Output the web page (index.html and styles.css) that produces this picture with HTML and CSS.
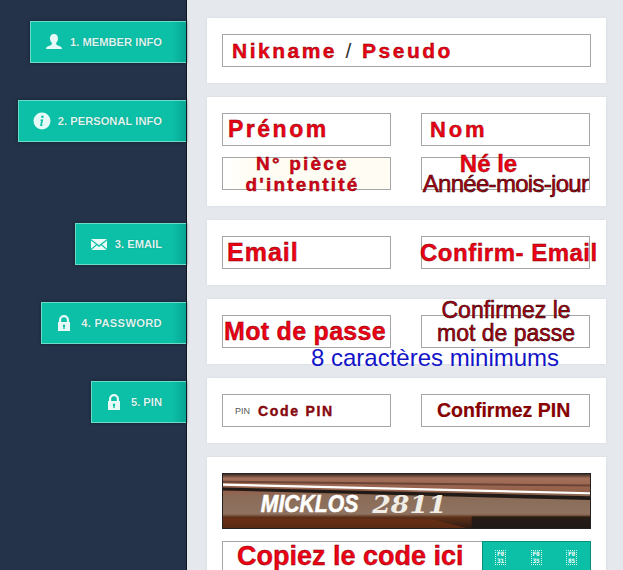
FILE: index.html
```html
<!DOCTYPE html>
<html lang="fr">
<head>
<meta charset="utf-8">
<title>Inscription</title>
<link rel="stylesheet" href="styles.css">
</head>
<body>
<div class="page">
  <aside class="sidebar">
    <div class="tab">
      <svg class="ico" viewBox="0 0 18 18"><path d="M9 1c2.700 0 4 2 4 4.500 0 1.800-.8 3.300-1.800 4.200v1.300c0 .8 1 1.100 3 1.900 1.500.6 2.800 1.300 2.800 3.100H1c0-1.800 1.300-2.500 2.800-3.100 2-.8 3-1.100 3-1.900V9.700C5.800 8.800 5 7.300 5 5.500 5 3 6.300 1 9 1z"/></svg>
      <span>1. MEMBER INFO</span>
    </div>
    <div class="tab">
      <svg class="ico" viewBox="0 0 18 18"><circle cx="9" cy="9" r="8.500"/><path class="cut" d="M9.400 3.400a1.300 1.300 0 1 1 0 2.600 1.300 1.300 0 0 1 0-2.600zM7 7.800l3.300-.5-1.300 5.300c-.1.500.3.500 1.300-.2l.2.400c-1.300 1.300-3.700 1.900-3.300.1l.9-3.900c.1-.6-.3-.6-1-.3z"/></svg>
      <span>2. PERSONAL INFO</span>
    </div>
    <div class="tab tab-email">
      <svg class="ico" viewBox="0 0 18 18"><path d="M1 4h16L9 10.300zM1 5.600v8.200l5-4.300zM17 5.600v8.200l-5-4.300zM6.900 10.200 9 11.900l2.100-1.700 5.500 4.800H1.400z"/></svg>
      <span>3. EMAIL</span>
    </div>
    <div class="tab tab-lock tab-pass">
      <svg class="ico" viewBox="0 0 18 18"><path fill-rule="evenodd" d="M4 8V6a5 5 0 0 1 10 0v2h1v9H3V8zm2.200 0h5.600V6a2.800 2.800 0 0 0-5.600 0zM9 10.500a1.300 1.300 0 0 0-.7 2.400V15h1.400v-2.100A1.300 1.300 0 0 0 9 10.500z"/></svg>
      <span>4. PASSWORD</span>
    </div>
    <div class="tab tab-lock">
      <svg class="ico" viewBox="0 0 18 18"><path fill-rule="evenodd" d="M4 8V6a5 5 0 0 1 10 0v2h1v9H3V8zm2.200 0h5.600V6a2.800 2.800 0 0 0-5.600 0zM9 10.500a1.300 1.300 0 0 0-.7 2.400V15h1.400v-2.100A1.300 1.300 0 0 0 9 10.500z"/></svg>
      <span>5. PIN</span>
    </div>
  </aside>

  <main class="main">
    <section class="card">
      <div class="field"><span class="note nik">Nikname <i class="slash">/</i> Pseudo</span></div>
    </section>

    <section class="card">
      <div class="row">
        <div class="field"><span class="note prenom">Prénom</span></div>
        <div class="field"><span class="note nom">Nom</span></div>
      </div>
      <div class="row">
        <div class="field cream"><span class="note piece">N° pièce<br>d'intentité</span></div>
        <div class="field"><span class="note stack"><b class="nele">Né le</b><span class="dark annee">Année-mois-jour</span></span></div>
      </div>
    </section>

    <section class="card">
      <div class="row">
        <div class="field"><span class="note email">Email</span></div>
        <div class="field"><span class="note cemail">Confirm- Email</span></div>
      </div>
    </section>

    <section class="card">
      <div class="row">
        <div class="field"><span class="note motpasse">Mot de passe</span></div>
        <div class="field"><span class="note dark confmot">Confirmez le<br>mot de passe</span></div>
      </div>
      <p class="hint">8 caractères minimums</p>
    </section>

    <section class="card">
      <div class="row">
        <div class="field"><span class="ph">PIN</span><span class="note pin">Code PIN</span></div>
        <div class="field"><span class="note cpin">Confirmez PIN</span></div>
      </div>
    </section>

    <section class="card">
      <svg class="captcha" viewBox="0 0 369 56" preserveAspectRatio="none">
        <defs>
          <linearGradient id="wood" x1="0" y1="0" x2="0" y2="1">
            <stop offset="0" stop-color="#3a2a22"/>
            <stop offset=".08" stop-color="#a5705a"/>
            <stop offset=".3" stop-color="#94604a"/>
            <stop offset=".42" stop-color="#8a6c58"/>
            <stop offset=".74" stop-color="#8f7360"/>
            <stop offset=".8" stop-color="#5e3018"/>
            <stop offset="1" stop-color="#2e1a12"/>
          </linearGradient>
        </defs>
        <rect width="369" height="56" fill="url(#wood)"/>
        <path d="M0 8 L369 12" stroke="#6b4436" stroke-width="2"/>
        <path d="M0 14 L369 23 L369 27 L0 17z" fill="#221a16"/>
        <path d="M0 34 L0 46 L210 47 L245 56 L0 56z" fill="#7a3414" opacity=".55"/>
        <rect x="250" y="44" width="119" height="12" fill="#1d1a18" opacity=".85"/>
        <path d="M0 11 L369 20" stroke="#fff" stroke-width="2.200"/>
        <text class="cap-a" x="38" y="39" textLength="98" lengthAdjust="spacingAndGlyphs">MICKLOS</text>
        <text class="cap-b" x="150" y="40" textLength="75" lengthAdjust="spacingAndGlyphs">2811</text>
      </svg>
      <div class="code-row">
        <div class="code-input"><span class="note copiez">Copiez le code ici</span></div>
        <div class="code-btn">
          <span class="tofu">F0<br>31</span>
          <span class="tofu">F0<br>35</span>
          <span class="tofu">F0<br>85</span>
        </div>
      </div>
    </section>
  </main>
</div>
</body>
</html>
```
FILE: styles.css
```css
* { box-sizing: border-box; }
html, body { margin: 0; height: 100%; overflow: hidden; }
body { font-family: "Liberation Sans", Arial, sans-serif; background: #e5e8ec; }

.page { display: flex; height: 570px; overflow: hidden; }

.sidebar {
  width: 187px;
  flex: none;
  background: #243349;
  border-right: 1px solid #10151c;
  display: flex;
  flex-direction: column;
  align-items: flex-end;
  gap: 37px;
  padding-top: 21px;
}

.tab {
  height: 42px;
  display: flex;
  align-items: center;
  gap: 7px;
  padding: 0 24px 0 14px;
  color: #dcf6f1;
  font-size: 11.2px;
  font-weight: 700;
  background: linear-gradient(90deg, #0cc0a8 0, #0cc0a8 calc(100% - 14px), #08a592 100%);
  border: 1px solid #6adcc8;
  border-right: 0;
  box-shadow: 0 0 3px #10202c;
  text-shadow: 0 0 1px #0a7f70;
}
.tab-email { margin-top: 44px; }
.tab-lock { gap: 8px; padding-left: 13px; }
.tab-pass span { letter-spacing: .3px; }
.ico { width: 18px; height: 18px; fill: #e8faf7; flex: none; }
.ico .cut { fill: #0cc0a8; }

.main {
  flex: 1;
  min-width: 0;
  padding: 18px 17px 0 20px;
  display: flex;
  flex-direction: column;
  gap: 14px;
  overflow: hidden;
}

.card {
  background: #fff;
  padding: 16px 15px;
  display: flex;
  flex-direction: column;
  gap: 11px;
  position: relative;
  flex: none;
  box-shadow: 0 0 2px #d4d8dc;
}

.row { display: grid; grid-template-columns: 169px 169px; column-gap: 30px; }

.field {
  height: 33px;
  width: 100%;
  border: 1px solid #a6a6a6;
  display: flex;
  align-items: center;
  white-space: nowrap;
  min-width: 0;
  background: #fff;
}
.cream { background: linear-gradient(90deg, #fff 0, #fffdf3 15%, #fffdf3 100%); }

.note { font-weight: 700; color: #ee0015; -webkit-text-stroke: .4px #7a0000; }
.ph { font-size: 9px; color: #555; margin-left: 12px; }

.nik { font-size: 21px; letter-spacing: 2.500px; margin-left: 9px; }
.slash { font-style: normal; font-weight: 400; color: #333; -webkit-text-stroke: 0; }
.prenom { font-size: 23px; letter-spacing: 2.500px; margin-left: 5px; }
.nom { font-size: 22px; letter-spacing: 2.800px; margin-left: 8px; }
.piece {
  font-size: 19px;
  line-height: 21px;
  letter-spacing: 2.200px;
  text-align: center;
  margin: 0 auto;
  transform: translateX(-4px);
  color: #d8001a;
}
.stack { display: flex; flex-direction: column; align-items: center; width: 100%; line-height: 20px; -webkit-text-stroke: 0; }
.nele { font-size: 24px; margin-left: -34px; color: #ee0015; -webkit-text-stroke: .4px #7a0000; }
.dark {
  font-weight: 400;
  color: #b00012;
  -webkit-text-stroke: .6px #300;
}
.annee { font-size: 24px; letter-spacing: -.7px; }
.email { font-size: 25px; letter-spacing: 1px; margin-left: 4px; }
.cemail { font-size: 24px; letter-spacing: .5px; margin-left: -2px; }
.motpasse { font-size: 25px; letter-spacing: .3px; margin-left: 1px; }
.confmot { font-size: 23px; line-height: 23px; text-align: center; margin-left: 15px; transform: translateY(-10px); }
.pin { font-size: 14px; letter-spacing: 1.700px; color: #8b0a14; margin-left: 8px; }
.cpin { font-size: 19.500px; color: #8a0000; margin-left: 15px; -webkit-text-stroke: .2px #600; }

.hint {
  position: absolute;
  left: 104px;
  top: 47px;
  margin: 0;
  font-size: 24px;
  line-height: 24px;
  color: #1414c8;
}

.captcha { width: 369px; height: 56px; display: block; flex: none; border: 1px solid #222; }
.cap-a { font: italic 700 25px "Liberation Sans", sans-serif; fill: #fff; stroke: #fff; stroke-width: .6px; }
.cap-b { font: italic 700 26px "DejaVu Serif", serif; fill: #f0ece6; }

.code-row { display: flex; height: 40px; margin-top: 1px; }
.code-input {
  width: 260px;
  border: 1px solid #a6a6a6;
  border-right: 0;
  padding-left: 14px;
  display: flex;
  align-items: flex-start;
}
.copiez { font-size: 27px; line-height: 28px; white-space: nowrap; }
.code-btn {
  width: 109px;
  background: #0cc0a8;
  border: 1px solid #07907e;
  display: flex;
  justify-content: space-between;
  align-items: flex-start;
  padding: 8px 13px 0 12px;
}
.tofu {
  width: 11px;
  height: 15px;
  border: 1px dotted #d8f6f0;
  font: 700 6px/6.500px "DejaVu Sans Mono", monospace;
  color: #fff;
  text-align: center;
  overflow: hidden;
}
```
